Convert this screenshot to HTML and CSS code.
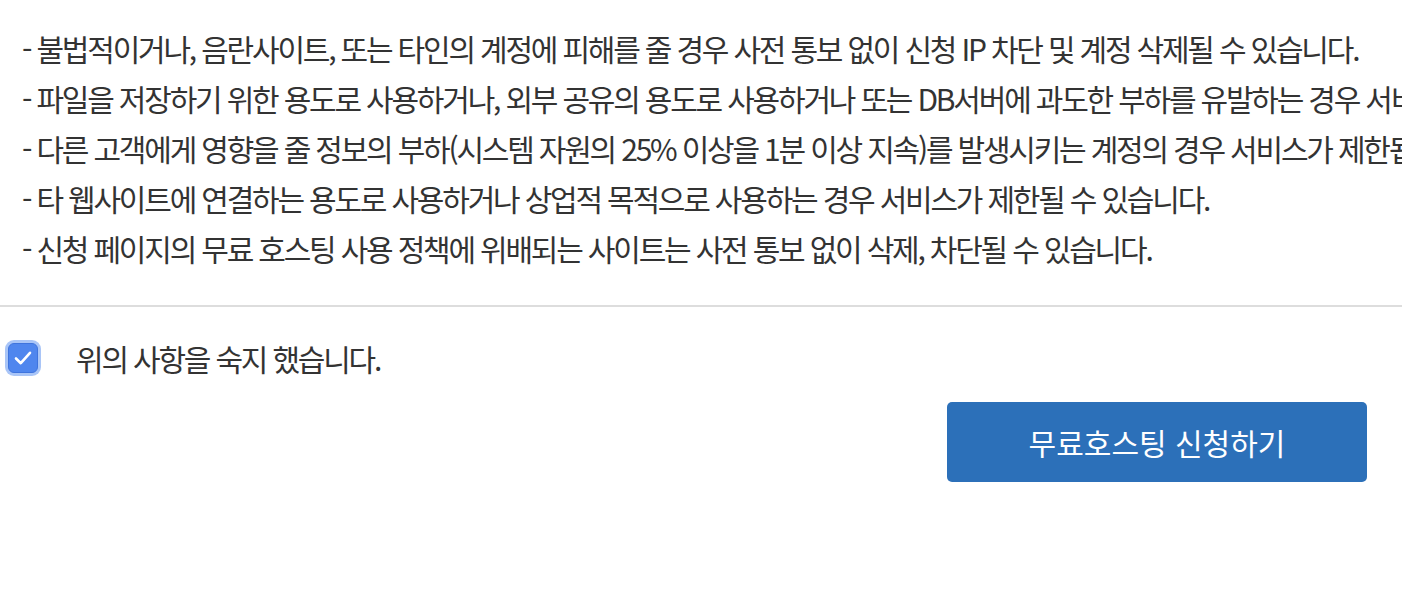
FILE: index.html
```html
<!DOCTYPE html>
<html lang="ko">
<head>
<meta charset="utf-8">
<link rel="stylesheet" href="styles.css">
</head>
<body>
<div class="page">
  <ul class="rules">
    <li>- 불법적이거나, 음란사이트, 또는 타인의 계정에 피해를 줄 경우 사전 통보 없이 신청 IP 차단 및 계정 삭제될 수 있습니다.</li>
    <li>- 파일을 저장하기 위한 용도로 사용하거나, 외부 공유의 용도로 사용하거나 또는 DB서버에 과도한 부하를 유발하는 경우 서비스가 제한될 수 있습니다.</li>
    <li>- 다른 고객에게 영향을 줄 정보의 부하(시스템 자원의 25% 이상을 1분 이상 지속)를 발생시키는 계정의 경우 서비스가 제한됩니다.</li>
    <li>- 타 웹사이트에 연결하는 용도로 사용하거나 상업적 목적으로 사용하는 경우 서비스가 제한될 수 있습니다.</li>
    <li>- 신청 페이지의 무료 호스팅 사용 정책에 위배되는 사이트는 사전 통보 없이 삭제, 차단될 수 있습니다.</li>
  </ul>
  <hr class="divider">
  <label class="agree">
    <span class="check">
      <svg class="check-icon" viewBox="0 0 20 18" width="20" height="18"><path d="M3 9.5L7.8 14.2L17 3.8" fill="none" stroke="#fff" stroke-width="2.6" stroke-linecap="round" stroke-linejoin="round"/></svg>
    </span>
    <span class="agree-text">위의 사항을 숙지 했습니다.</span>
  </label>
  <div class="actions">
    <button class="submit" type="button">무료호스팅 신청하기</button>
  </div>
</div>
</body>
</html>
```

FILE: styles.css
```css
html, body {
  margin: 0;
  padding: 0;
  background: #fff;
}
body {
  font-family: "Noto Sans CJK KR", "Noto Sans", sans-serif;
  color: #333;
  overflow: hidden;
}
.page {
  width: 1402px;
  height: 604px;
  overflow: hidden;
}
.rules {
  list-style: none;
  margin: 0;
  padding: 23px 0 0 22px;
}
.rules li {
  white-space: nowrap;
  font-size: 30px;
  line-height: 50px;
  letter-spacing: -2.2px;
}
.divider {
  border: 0;
  height: 2px;
  background: #dddddd;
  margin: 32px 0 0 0;
}
.agree {
  display: flex;
  align-items: center;
  gap: 38px;
  margin: 33px 0 0 5px;
  height: 36px;
}
.check {
  flex: none;
  width: 28px;
  height: 28px;
  border-radius: 6px;
  background: #4f86ee;
  border: 1px solid #3f74dd;
  box-shadow: 0 0 0 3px #a9c5f7;
  display: flex;
  align-items: center;
  justify-content: center;
  margin-left: 3px;
}
.check-icon {
  display: block;
  width: 20px;
  height: 18px;
  flex: none;
}
.agree-text {
  font-size: 30px;
  letter-spacing: -2.2px;
  color: #333;
}
.actions {
  display: flex;
  justify-content: flex-end;
  padding-right: 35px;
  margin-top: 26px;
}
.submit {
  width: 420px;
  height: 80px;
  background: #2c70b9;
  color: #fff;
  border: 0;
  border-radius: 5px;
  font-family: "Noto Sans CJK KR", "Noto Sans", sans-serif;
  font-size: 30px;
  letter-spacing: 0;
}
```
